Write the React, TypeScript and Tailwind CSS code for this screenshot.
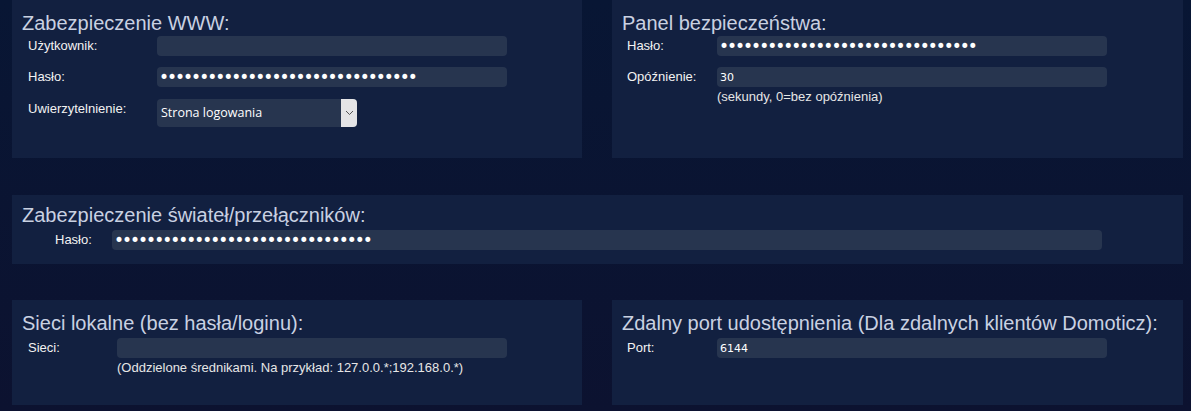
import React from "react";

const dots = "x".repeat(32);

function Field({
  value,
  password,
  width,
}: {
  value?: string;
  password?: boolean;
  width: string;
}) {
  return (
    <input
      type={password ? "password" : "text"}
      readOnly
      defaultValue={value ?? ""}
      className={`${width} h-[20px] rounded-[4px] bg-[#27354f] text-white outline-none [font-family:'DejaVu_Sans',sans-serif] ${
        password
          ? "pl-[2px] text-[17px] leading-[20px] tracking-[-2px]"
          : "pl-[3px] text-[11px]"
      }`}
    />
  );
}

function Title({ children }: { children: React.ReactNode }) {
  return (
    <h2 className="text-[20px] leading-[23px] text-[#c9d1e2] [font-family:'Liberation_Sans',Arial,sans-serif]">
      {children}
    </h2>
  );
}

function Label({ children, w }: { children: React.ReactNode; w: string }) {
  return (
    <div className={`${w} shrink-0 text-[13px] leading-[20px] text-[#f2f2f2]`}>
      {children}
    </div>
  );
}

function Hint({ children }: { children: React.ReactNode }) {
  return (
    <span className="mt-[2px] text-[13px] leading-[15px] text-[#e6e6e6]">
      {children}
    </span>
  );
}

export default function App() {
  return (
    <div className="min-h-[411px] w-full bg-gradient-to-b from-[#081634] to-[#0c1230] pl-[12px] pr-[8px] pb-[6px] [font-family:'Liberation_Sans',Arial,sans-serif]">
      <div className="flex gap-[30px]">
        <section className="h-[158px] w-[570px] bg-[#122040] pt-[12px] pl-[10px]">
          <Title>Zabezpieczenie WWW:</Title>
          <div className="mt-[1px] flex flex-col gap-[11px] pl-[6px]">
            <div className="flex items-start">
              <Label w="w-[129px]">Użytkownik:</Label>
              <Field width="w-[350px]" />
            </div>
            <div className="flex items-start">
              <Label w="w-[129px]">Hasło:</Label>
              <Field width="w-[350px]" password value={dots} />
            </div>
            <div className="mt-[1px] flex items-start">
              <Label w="w-[129px]">Uwierzytelnienie:</Label>
              <div className="flex h-[28px] w-[200px] rounded-[4px] bg-[#27354f]">
                <span className="flex-1 pl-[4px] text-[12.5px] leading-[28px] text-white [font-family:'Open_Sans',sans-serif]">
                  Strona logowania
                </span>
                <span className="flex w-[16px] items-center justify-center rounded-r-[4px] bg-[#e4e4e6]">
                  <svg width="9" height="6" viewBox="0 0 9 6">
                    <path d="M1 1l3.5 3.5L8 1" fill="none" stroke="#555" strokeWidth="1" />
                  </svg>
                </span>
              </div>
            </div>
          </div>
        </section>

        <section className="h-[158px] flex-1 bg-[#122040] pt-[12px] pl-[10px]">
          <Title>Panel bezpieczeństwa:</Title>
          <div className="mt-[1px] flex flex-col gap-[11px] pl-[5px]">
            <div className="flex items-start">
              <Label w="w-[90px]">Hasło:</Label>
              <Field width="w-[390px]" password value={dots} />
            </div>
            <div className="flex items-start">
              <Label w="w-[90px]">Opóźnienie:</Label>
              <div className="flex flex-col">
                <Field width="w-[390px]" value="30" />
                <Hint>(sekundy, 0=bez opóźnienia)</Hint>
              </div>
            </div>
          </div>
        </section>
      </div>

      <section className="mt-[37px] h-[69px] bg-[#122040] pt-[9px] pl-[10px]">
        <Title>Zabezpieczenie świateł/przełączników:</Title>
        <div className="mt-[3px] flex items-start pl-[33px]">
          <Label w="w-[57px]">Hasło:</Label>
          <Field width="w-[990px]" password value={dots} />
        </div>
      </section>

      <div className="mt-[36px] flex gap-[30px]">
        <section className="h-[105px] w-[570px] bg-[#122040] pt-[12px] pl-[10px]">
          <Title>Sieci lokalne (bez hasła/loginu):</Title>
          <div className="mt-[3px] flex items-start pl-[6px]">
            <Label w="w-[89px]">Sieci:</Label>
            <div className="flex flex-col">
              <Field width="w-[390px]" />
              <Hint>(Oddzielone średnikami. Na przykład: 127.0.0.*;192.168.0.*)</Hint>
            </div>
          </div>
        </section>

        <section className="h-[105px] flex-1 bg-[#122040] pt-[12px] pl-[10px]">
          <Title>Zdalny port udostępnienia (Dla zdalnych klientów Domoticz):</Title>
          <div className="mt-[3px] flex items-start pl-[5px]">
            <Label w="w-[90px]">Port:</Label>
            <Field width="w-[390px]" value="6144" />
          </div>
        </section>
      </div>
    </div>
  );
}
